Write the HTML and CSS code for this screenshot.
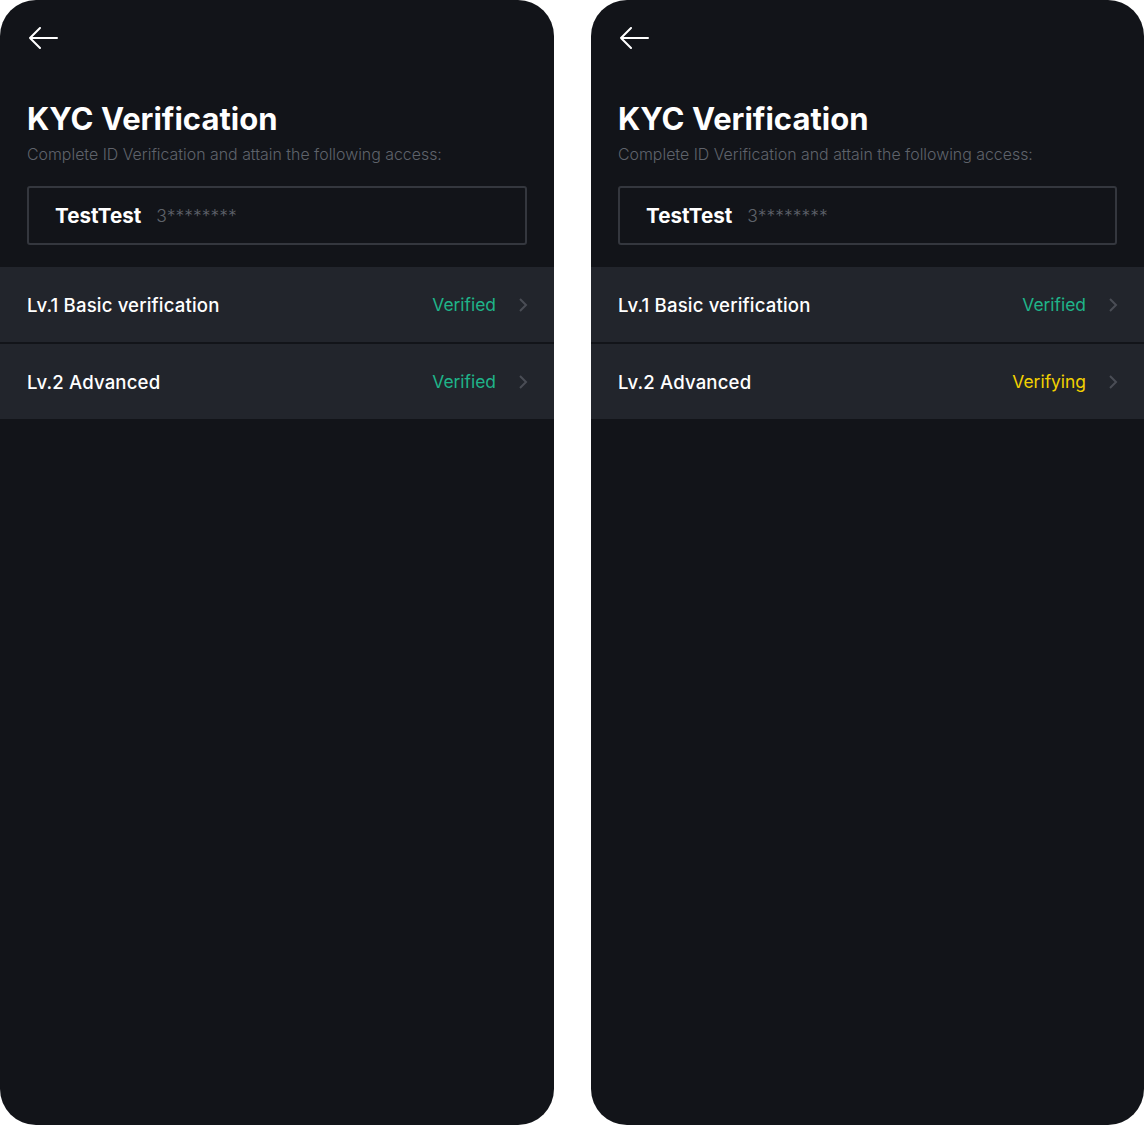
FILE: index.html
```html
<!DOCTYPE html>
<html>
<head>
<meta charset="utf-8">
<link rel="stylesheet" href="styles.css">
</head>
<body>
<div class="screens">
  <div class="phone">
    <div class="top">
      <svg class="back" width="30" height="22" viewBox="0 0 30 22"><path d="M12 1 L2 11 L12 21 M2 11 H29" fill="none" stroke="#fff" stroke-width="2" stroke-linecap="round" stroke-linejoin="round"/></svg>
      <h1 class="title">KYC Verification</h1>
      <p class="sub">Complete ID Verification and attain the following access:</p>
      <div class="user"><span class="name">TestTest</span><span class="id">3********</span></div>
    </div>
    <div class="list">
      <div class="row"><span class="label">Lv.1 Basic verification</span><span class="status ok">Verified</span><svg class="chev" width="10" height="16" viewBox="0 0 10 16"><path d="M2 2 L8 8 L2 14" fill="none" stroke="#4a4d55" stroke-width="2"/></svg></div>
      <div class="row"><span class="label">Lv.2 Advanced</span><span class="status ok">Verified</span><svg class="chev" width="10" height="16" viewBox="0 0 10 16"><path d="M2 2 L8 8 L2 14" fill="none" stroke="#4a4d55" stroke-width="2"/></svg></div>
    </div>
  </div>
  <div class="phone">
    <div class="top">
      <svg class="back" width="30" height="22" viewBox="0 0 30 22"><path d="M12 1 L2 11 L12 21 M2 11 H29" fill="none" stroke="#fff" stroke-width="2" stroke-linecap="round" stroke-linejoin="round"/></svg>
      <h1 class="title">KYC Verification</h1>
      <p class="sub">Complete ID Verification and attain the following access:</p>
      <div class="user"><span class="name">TestTest</span><span class="id">3********</span></div>
    </div>
    <div class="list">
      <div class="row"><span class="label">Lv.1 Basic verification</span><span class="status ok">Verified</span><svg class="chev" width="10" height="16" viewBox="0 0 10 16"><path d="M2 2 L8 8 L2 14" fill="none" stroke="#4a4d55" stroke-width="2"/></svg></div>
      <div class="row"><span class="label">Lv.2 Advanced</span><span class="status pending">Verifying</span><svg class="chev" width="10" height="16" viewBox="0 0 10 16"><path d="M2 2 L8 8 L2 14" fill="none" stroke="#4a4d55" stroke-width="2"/></svg></div>
    </div>
  </div>
</div>
</body>
</html>
```
FILE: styles.css
```css
* { box-sizing: border-box; }
html, body { margin: 0; padding: 0; background: #ffffff; }
body { font-family: Inter, "Noto Sans", sans-serif; }
.screens { display: flex; gap: 37px; width: 1144px; height: 1125px; }
.phone { width: 554px; height: 1125px; background: #121419; border-radius: 36px; overflow: hidden; flex: none; }
.phone + .phone { width: 553px; }
.top { padding: 27px 27px 22px 27px; }
.back { display: block; margin-left: 1px; }
.title { margin: 52px 0 0 0; font-size: 31px; font-weight: 700; color: #ffffff; line-height: 36px; letter-spacing: 0; }
.sub { margin: 8px 0 0 0; font-size: 15.9px; font-weight: 300; color: #5f636b; line-height: 20px; }
.user { margin-top: 21px; height: 59px; border: 2px solid #34373e; border-radius: 3px; display: flex; align-items: center; padding-left: 26px; gap: 15px; }
.name { font-size: 20.6px; font-weight: 700; color: #ffffff; }
.id { font-size: 17.5px; font-weight: 300; color: #5f636b; }
.list { display: flex; flex-direction: column; gap: 2px; }
.row { height: 75px; background: #22252c; display: flex; align-items: center; padding: 0 27px; }
.label { font-size: 18.6px; font-weight: 500; color: #ffffff; flex: 1; letter-spacing: 0.15px; }
.status { font-size: 17.4px; margin-right: 22px; }
.ok { color: #1fb489; }
.pending { color: #f2d100; }
.chev { display: block; margin-right: -1px; }
```
